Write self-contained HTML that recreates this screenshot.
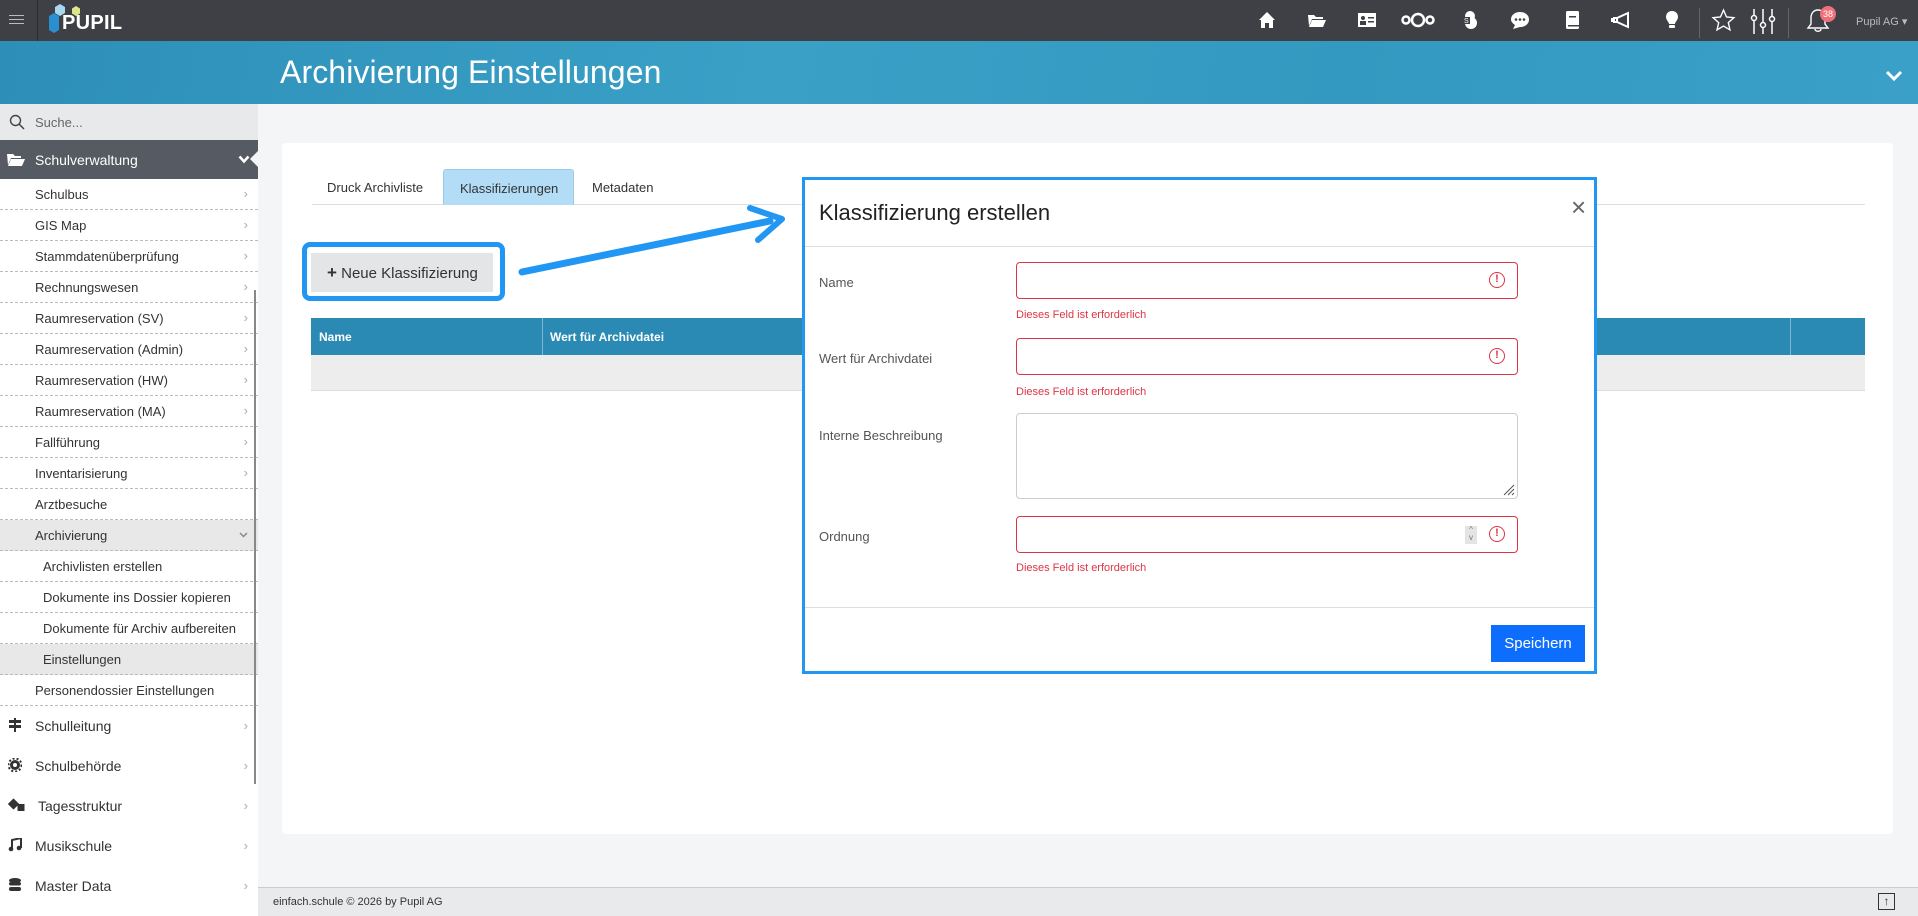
<!DOCTYPE html>
<html><head><meta charset="utf-8"><style>
*{box-sizing:border-box;margin:0;padding:0}
body{width:1918px;height:916px;overflow:hidden;font-family:"Liberation Sans",sans-serif;background:#f4f5f7;position:relative;color:#333}
.top{position:absolute;left:0;top:0;width:1918px;height:41px;background:#3f4046}
.hdr{position:absolute;left:0;top:41px;width:1918px;height:63px;background:linear-gradient(100deg,#2d8fb8 0%,#3aa0c6 40%,#3399c0 70%,#3aa0c8 100%)}
.hdr h1{position:absolute;left:280px;top:13px;font-weight:normal;font-size:32px;color:#fff;letter-spacing:0.1px}
.side{position:absolute;left:0;top:104px;width:258px;height:812px;background:#fff}
.search{height:36px;background:#e8e9eb;font-size:13px;color:#666;padding:11px 0 0 35px;position:relative}
.sv{height:39px;background:#565a63;color:#fff;font-size:14px;padding:12px 0 0 35px;position:relative}
.it{height:31px;border-bottom:1px dashed #bbb;font-size:13px;color:#333;padding:8px 0 0 35px;position:relative}
.it.sub{padding-left:43px}
.it.act{background:#e8e8e8}
.it .ch,.big .ch{position:absolute;right:10px;top:7px;color:#aaa;font-size:13px}
.big{height:40px;font-size:14px;color:#333;padding:12px 0 0 35px;position:relative}
.big .ic{position:absolute;left:8px;top:12px;width:14px;height:14px}
.card{position:absolute;left:282px;top:143px;width:1611px;height:691px;background:#fff;border-radius:4px}
.foot{position:absolute;left:258px;top:887px;width:1660px;height:29px;background:#e9eaec;border-top:1px solid #ccc;font-size:11px;color:#333;padding:8px 15px}
.modal{position:absolute;left:802px;top:177px;width:795px;height:497px;background:#fff;border:3px solid #2196f3}
.lbl{position:absolute;left:14px;font-size:13px;color:#555}
.inp{position:absolute;left:211px;width:502px;height:37px;border:1px solid #dc3545;border-radius:4px}
.inp .w{position:absolute;right:12px;top:9px;width:16px;height:16px;border:1.6px solid #dc3545;border-radius:50%;color:#dc3545;font-size:11px;font-weight:bold;text-align:center;line-height:13px}
.err{position:absolute;left:211px;font-size:11px;color:#dc3545}
.ico{position:absolute;top:10px;width:20px;height:20px}
</style></head><body>
<div class="top">
  <div style="position:absolute;left:9px;top:15px;width:15px;height:1px;background:#bbb;box-shadow:0 4px 0 #bbb,0 8px 0 #bbb"></div>
  <div style="position:absolute;left:37px;top:0;width:1px;height:41px;background:#2c2d31"></div>
  <svg style="position:absolute;left:46px;top:2px" width="40" height="36" viewBox="0 0 40 36"><polygon points="14,2 19,5 19,11 14,14 9,11 9,5" fill="#a8d8f0"/><polygon points="30,4 34,6.5 34,11.5 30,14 26,11.5 26,6.5" fill="#dde68a"/><polygon points="8,11 13,14 13,28 8,31 3,28 3,14" fill="#2a8fd0"/></svg>
  <div style="position:absolute;left:62px;top:12px;font-size:20px;font-weight:bold;color:#fff;letter-spacing:0.3px">PUPIL</div>
  <svg class="ico" style="left:1257px" viewBox="0 0 20 20"><path d="M10 2 L18 10 H16 V18 H12 V13 H8 V18 H4 V10 H2 Z" fill="#fff"/></svg>
  <svg class="ico" style="left:1307px" viewBox="0 0 20 20"><path d="M1 5 H7 L9 7 H16 V9 H5 L2 16 Z M5 10 H19 L16 17 H2 Z" fill="#fff"/></svg>
  <svg class="ico" style="left:1357px" viewBox="0 0 20 20"><rect x="1" y="3" width="18" height="14" fill="#fff"/><circle cx="6" cy="8" r="2" fill="#3f4046"/><rect x="3" y="11" width="6" height="4" fill="#3f4046"/><rect x="11" y="7" width="6" height="1.5" fill="#3f4046"/><rect x="11" y="11" width="6" height="1.5" fill="#3f4046"/></svg>
  <svg style="position:absolute;left:1401px;top:11px" width="34" height="18" viewBox="0 0 34 18"><circle cx="5" cy="9" r="3.5" fill="none" stroke="#fff" stroke-width="2.5"/><circle cx="17" cy="9" r="6" fill="none" stroke="#fff" stroke-width="2.5"/><circle cx="29" cy="9" r="3.5" fill="none" stroke="#fff" stroke-width="2.5"/></svg>
  <svg class="ico" style="left:1460px" viewBox="0 0 20 20"><circle cx="10" cy="6" r="5" fill="#fff"/><circle cx="11" cy="13" r="6" fill="#fff"/><rect x="3" y="7" width="7" height="7" fill="#3f4046"/><text x="4" y="13" font-size="7" fill="#fff" font-family="Liberation Sans">S</text></svg>
  <svg class="ico" style="left:1510px" viewBox="0 0 20 20"><path d="M10 2 C15 2 19 5 19 9.5 C19 14 15 17 10 17 L3 19 L5 15 C2 13 1 11 1 9.5 C1 5 5 2 10 2Z" fill="#fff"/><circle cx="6" cy="9.5" r="1.3" fill="#3f4046"/><circle cx="10" cy="9.5" r="1.3" fill="#3f4046"/><circle cx="14" cy="9.5" r="1.3" fill="#3f4046"/></svg>
  <svg class="ico" style="left:1562px" viewBox="0 0 20 20"><rect x="4" y="1" width="13" height="18" rx="1.5" fill="#fff"/><rect x="7" y="6" width="7" height="1.5" fill="#3f4046"/><rect x="6" y="15" width="11" height="1.5" fill="#3f4046"/></svg>
  <svg class="ico" style="left:1611px" viewBox="0 0 20 20"><path d="M3 8 H6 L17 3 V17 L6 12 H3 Z M6 12 V8" fill="none" stroke="#fff" stroke-width="2"/><rect x="0" y="8" width="2" height="4" fill="#fff"/></svg>
  <svg class="ico" style="left:1662px" viewBox="0 0 20 20"><path d="M10 1 C14 1 16 4 16 7 C16 10 13 12 13 14 H7 C7 12 4 10 4 7 C4 4 6 1 10 1Z" fill="#fff"/><rect x="7" y="15" width="6" height="3" rx="1" fill="#fff"/></svg>
  <div style="position:absolute;left:1699px;top:8px;width:1px;height:30px;background:#666"></div>
  <svg style="position:absolute;left:1711px;top:8px" width="25" height="25" viewBox="0 0 24 24"><path d="M12 2 L14.9 8.6 L22 9.3 L16.6 14 L18.2 21 L12 17.3 L5.8 21 L7.4 14 L2 9.3 L9.1 8.6 Z" fill="none" stroke="#fff" stroke-width="1.3"/></svg>
  <svg style="position:absolute;left:1750px;top:8px" width="26" height="27" viewBox="0 0 26 27"><g stroke="#fff" stroke-width="1.5" fill="none"><line x1="4" y1="1" x2="4" y2="26"/><line x1="13" y1="1" x2="13" y2="26"/><line x1="22" y1="1" x2="22" y2="26"/><circle cx="4" cy="10" r="2.5" fill="#3f4046"/><circle cx="13" cy="17" r="2.5" fill="#3f4046"/><circle cx="22" cy="11" r="2.5" fill="#3f4046"/></g></svg>
  <div style="position:absolute;left:1788px;top:8px;width:1px;height:30px;background:#666"></div>
  <svg style="position:absolute;left:1806px;top:8px" width="24" height="26" viewBox="0 0 24 26"><path d="M12 2 C7 2 5 6 5 10 V16 L2 20 H22 L19 16 V10 C19 6 17 2 12 2Z M9 21 C9 24 15 24 15 21" fill="none" stroke="#fff" stroke-width="1.4"/></svg>
  <div style="position:absolute;left:1820px;top:6px;width:16px;height:16px;border-radius:50%;background:#f0707a;color:#fff;font-size:9px;text-align:center;line-height:16px">38</div>
  <div style="position:absolute;left:1856px;top:15px;font-size:11px;color:#bbb">Pupil AG &#9662;</div>
</div>
<div class="hdr"><h1>Archivierung Einstellungen</h1>
<svg style="position:absolute;left:1885px;top:29px" width="18" height="12" viewBox="0 0 18 12"><path d="M2 2 L9 9 L16 2" fill="none" stroke="#fff" stroke-width="3"/></svg></div>
<div class="side">
  <div class="search"><svg style="position:absolute;left:9px;top:10px" width="16" height="16" viewBox="0 0 16 16"><circle cx="6.5" cy="6.5" r="5" fill="none" stroke="#444" stroke-width="1.4"/><line x1="10" y1="10" x2="15" y2="15" stroke="#444" stroke-width="1.5"/></svg>Suche...</div>
  <div class="sv"><svg style="position:absolute;left:7px;top:13px" width="18" height="13" viewBox="0 0 18 13"><path d="M0 1 H6 L8 3 H14 V5 H4 L1 12 Z M4 6 H18 L15 13 H1 Z" fill="#fff"/></svg>Schulverwaltung<svg style="position:absolute;right:8px;top:15px" width="12" height="9" viewBox="0 0 12 9"><path d="M1.5 1.5 L6 6.5 L10.5 1.5" fill="none" stroke="#fff" stroke-width="2.5"/></svg><div style="position:absolute;right:0;top:11px;border:8px solid transparent;border-right-color:#f4f5f7"></div></div>
  <div class="it">Schulbus<span class="ch">›</span></div>
  <div class="it">GIS Map<span class="ch">›</span></div>
  <div class="it">Stammdatenüberprüfung<span class="ch">›</span></div>
  <div class="it">Rechnungswesen<span class="ch">›</span></div>
  <div class="it">Raumreservation (SV)<span class="ch">›</span></div>
  <div class="it">Raumreservation (Admin)<span class="ch">›</span></div>
  <div class="it">Raumreservation (HW)<span class="ch">›</span></div>
  <div class="it">Raumreservation (MA)<span class="ch">›</span></div>
  <div class="it">Fallführung<span class="ch">›</span></div>
  <div class="it">Inventarisierung<span class="ch">›</span></div>
  <div class="it">Arztbesuche</div>
  <div class="it act">Archivierung<svg style="position:absolute;right:10px;top:12px" width="9" height="6" viewBox="0 0 9 6"><path d="M1 1 L4.5 4.5 L8 1" fill="none" stroke="#888" stroke-width="1.5"/></svg></div>
  <div class="it sub">Archivlisten erstellen</div>
  <div class="it sub">Dokumente ins Dossier kopieren</div>
  <div class="it sub">Dokumente für Archiv aufbereiten</div>
  <div class="it sub act">Einstellungen</div>
  <div class="it">Personendossier Einstellungen</div>
  <div class="big"><svg class="ic" viewBox="0 0 14 14"><rect x="1" y="2" width="12" height="3" fill="#333"/><rect x="1" y="7" width="12" height="3" fill="#333"/><rect x="6" y="0" width="2" height="14" fill="#333"/></svg>Schulleitung<span class="ch" style="top:12px">›</span></div>
  <div class="big"><svg class="ic" viewBox="0 0 14 14"><circle cx="7" cy="7" r="5" fill="#333"/><circle cx="7" cy="7" r="6.5" fill="none" stroke="#333" stroke-width="2" stroke-dasharray="2 2"/><circle cx="7" cy="7" r="2" fill="#fff"/></svg>Schulbehörde<span class="ch" style="top:12px">›</span></div>
  <div class="big"><svg class="ic" viewBox="0 0 16 14" style="width:17px"><rect x="1" y="2" width="8" height="8" transform="rotate(45 5 6)" fill="#333"/><rect x="9" y="6" width="7" height="7" fill="#333"/></svg><span style="margin-left:3px">Tagesstruktur</span><span class="ch" style="top:12px">›</span></div>
  <div class="big"><svg class="ic" viewBox="0 0 14 14"><path d="M4 11 V2 L13 0 V10" fill="none" stroke="#333" stroke-width="2"/><circle cx="3" cy="11" r="2.3" fill="#333"/><circle cx="11" cy="10" r="2.3" fill="#333"/></svg>Musikschule<span class="ch" style="top:12px">›</span></div>
  <div class="big"><svg class="ic" viewBox="0 0 14 14"><ellipse cx="7" cy="2.5" rx="6" ry="2.5" fill="#333"/><rect x="1" y="4" width="12" height="3.5" rx="2" fill="#333"/><rect x="1" y="9" width="12" height="4" rx="2" fill="#333"/></svg>Master Data<span class="ch" style="top:12px">›</span></div>
  <div style="position:absolute;left:254px;top:186px;width:2px;height:494px;background:#888"></div>
</div>
<div class="card">
  <div style="position:absolute;left:30px;top:61px;width:1553px;height:1px;background:#ddd"></div>
  <div style="position:absolute;left:45px;top:37px;font-size:13px;color:#333">Druck Archivliste</div>
  <div style="position:absolute;left:161px;top:26px;width:131px;height:36px;background:#b3dcf7;border:1px solid #9ccbea;border-bottom:none;border-radius:3px 3px 0 0;font-size:13px;padding:11px 0 0 16px">Klassifizierungen</div>
  <div style="position:absolute;left:310px;top:37px;font-size:13px">Metadaten</div>
  <div style="position:absolute;left:20px;top:99px;width:203px;height:59px;border:5px solid #2196f3;border-radius:8px"></div>
  <div style="position:absolute;left:29px;top:110px;width:182px;height:39px;background:#e4e5e7;font-size:15px;padding:10px 0 0 16px"><b style="font-size:17px">+</b> Neue Klassifizierung</div>
  <div style="position:absolute;left:29px;top:175px;width:1554px;height:37px;background:#2a8ab4;color:#fff;font-size:12px;font-weight:bold">
    <span style="position:absolute;left:8px;top:12px">Name</span>
    <div style="position:absolute;left:231px;top:0;width:1px;height:37px;background:#7ab8d4"></div>
    <span style="position:absolute;left:239px;top:12px">Wert für Archivdatei</span>
    <div style="position:absolute;left:1479px;top:0;width:1px;height:37px;background:#7ab8d4"></div>
  </div>
  <div style="position:absolute;left:29px;top:212px;width:1554px;height:36px;background:#ededed;border-bottom:1px solid #ddd"></div>
</div>
<svg style="position:absolute;left:0;top:0" width="1918" height="916"><line x1="522" y1="272" x2="770" y2="221" stroke="#2196f3" stroke-width="7" stroke-linecap="round"/><path d="M750 208 L782 219 L758 240" fill="none" stroke="#2196f3" stroke-width="6" stroke-linecap="round" stroke-linejoin="round"/></svg>
<div class="modal">
  <div style="position:absolute;left:14px;top:20px;font-size:22px;color:#222">Klassifizierung erstellen</div>
  <div style="position:absolute;left:766px;top:12px;font-size:26px;color:#666;font-weight:lighter">×</div>
  <div style="position:absolute;left:0;top:66px;width:789px;height:1px;background:#ddd"></div>
  <div class="lbl" style="top:95px">Name</div>
  <div class="inp" style="top:82px"><div class="w">!</div></div>
  <div class="err" style="top:129px">Dieses Feld ist erforderlich</div>
  <div class="lbl" style="top:171px">Wert für Archivdatei</div>
  <div class="inp" style="top:158px"><div class="w">!</div></div>
  <div class="err" style="top:206px">Dieses Feld ist erforderlich</div>
  <div class="lbl" style="top:248px">Interne Beschreibung</div>
  <div style="position:absolute;left:211px;top:233px;width:502px;height:86px;border:1px solid #ccc;border-radius:4px"><svg style="position:absolute;right:2px;bottom:2px" width="12" height="12"><path d="M11 1 L1 11 M11 5 L5 11 M11 9 L9 11" stroke="#555"/></svg></div>
  <div class="lbl" style="top:349px">Ordnung</div>
  <div class="inp" style="top:336px"><div class="w">!</div><div style="position:absolute;right:40px;top:9px;width:12px;height:18px;background:#e4e4e4;font-size:8px;color:#777;text-align:center;line-height:8px">^<br>v</div></div>
  <div class="err" style="top:382px">Dieses Feld ist erforderlich</div>
  <div style="position:absolute;left:0;top:427px;width:789px;height:1px;background:#ddd"></div>
  <div style="position:absolute;left:686px;top:445px;width:94px;height:37px;background:#0d6efd;color:#fff;font-size:15px;text-align:center;line-height:37px">Speichern</div>
</div>
<div class="foot">einfach.schule © 2026 by Pupil AG
<div style="position:absolute;left:1620px;top:5px;width:17px;height:17px;border:1.5px solid #333;font-size:12px;text-align:center;line-height:14px;font-weight:bold">&#8593;</div></div>
</body></html>
